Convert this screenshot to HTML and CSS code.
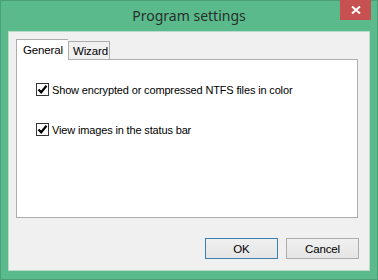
FILE: index.html
```html
<!DOCTYPE html>
<html>
<head>
<meta charset="utf-8">
<link rel="stylesheet" href="styles.css">
</head>
<body>
<div class="window">
  <div class="titlebar">
    <span class="title">Program settings</span>
    <div class="close">
      <svg width="10" height="8" viewBox="0 0 10 8"><path d="M1 0.5 L9 7.5 M9 0.5 L1 7.5" stroke="#fff" stroke-width="2" fill="none"/></svg>
    </div>
  </div>
  <div class="client">
    <div class="tabs">
      <div class="tab active">General</div>
      <div class="tab">Wizard</div>
    </div>
    <div class="panel">
      <label class="check">
        <span class="box"><svg width="11" height="11" viewBox="0 0 11 11"><path d="M1.5 5.5 L4.2 8.3 L9.5 1.8" stroke="#000" stroke-width="2.2" fill="none"/></svg></span>
        <span>Show encrypted or compressed NTFS files in color</span>
      </label>
      <label class="check">
        <span class="box"><svg width="11" height="11" viewBox="0 0 11 11"><path d="M1.5 5.5 L4.2 8.3 L9.5 1.8" stroke="#000" stroke-width="2.2" fill="none"/></svg></span>
        <span>View images in the status bar</span>
      </label>
    </div>
    <div class="buttons">
      <div class="btn default">OK</div>
      <div class="btn">Cancel</div>
    </div>
  </div>
</div>
</body>
</html>
```
FILE: styles.css
```css
html, body {
  margin: 0;
  padding: 0;
}
body {
  width: 378px;
  height: 280px;
  overflow: hidden;
  background: #5bba8c;
}
.window {
  box-sizing: border-box;
  width: 378px;
  height: 280px;
  border: 1px solid #4aa078;
  background: #5bba8c;
  display: flex;
  flex-direction: column;
}
.titlebar {
  position: relative;
  height: 30px;
  display: flex;
  align-items: center;
  justify-content: center;
}
.title {
  font-family: "Noto Sans", "Open Sans", sans-serif;
  font-size: 14px;
  color: #26302a;
  margin-top: -2px;
}
.close {
  position: absolute;
  right: 6px;
  top: -1px;
  width: 31px;
  height: 20px;
  background: #c75050;
  display: flex;
  align-items: center;
  justify-content: center;
}
.client {
  box-sizing: border-box;
  margin: 0 7px 8px 7px;
  height: 240px;
  background: #f0f0f0;
  border: 1px solid #b8dcc9;
  display: flex;
  flex-direction: column;
  font-family: "Liberation Sans", Arial, sans-serif;
  font-size: 11px;
  letter-spacing: -0.15px;
  color: #000;
}
.tabs {
  display: flex;
  align-items: flex-end;
  height: 20px;
  margin: 7px 0 0 7px;
  position: relative;
  z-index: 1;
}
.tab {
  box-sizing: border-box;
  height: 18px;
  padding: 0 4px;
  border: 1px solid #adadad;
  border-bottom: none;
  background: #f0f0f0;
  display: flex;
  align-items: center;
  font-size: 11.5px;
}
.tab.active {
  height: 21px;
  margin-bottom: -1px;
  width: 52px;
  padding: 0 6px;
  background: #fff;
  border-right: none;
  align-items: flex-start;
  padding-top: 4px;
}
.tab.active + .tab {
  width: 42px;
  padding-left: 4px;
  padding-top: 1px;
}
.panel {
  box-sizing: border-box;
  margin: 0 11px 0 7px;
  height: 159px;
  background: #fff;
  border: 1px solid #adadad;
  padding: 23px 0 0 19px;
  display: flex;
  flex-direction: column;
  gap: 27px;
}
.check {
  display: flex;
  align-items: center;
  gap: 3px;
  height: 13px;
  font-size: 11px;
}
.box {
  box-sizing: border-box;
  width: 13px;
  height: 13px;
  border: 1px solid #333;
  background: #fff;
  display: flex;
  align-items: center;
  justify-content: center;
}
.buttons {
  display: flex;
  justify-content: flex-end;
  gap: 8px;
  margin: 20px 10px 0 0;
}
.btn {
  box-sizing: border-box;
  width: 73px;
  height: 21px;
  border: 1px solid #acacac;
  background: linear-gradient(#f0f0f0, #e5e5e5);
  display: flex;
  align-items: center;
  justify-content: center;
  font-size: 11.5px;
}
.btn.default {
  border-color: #3c7fb1;
}
```
